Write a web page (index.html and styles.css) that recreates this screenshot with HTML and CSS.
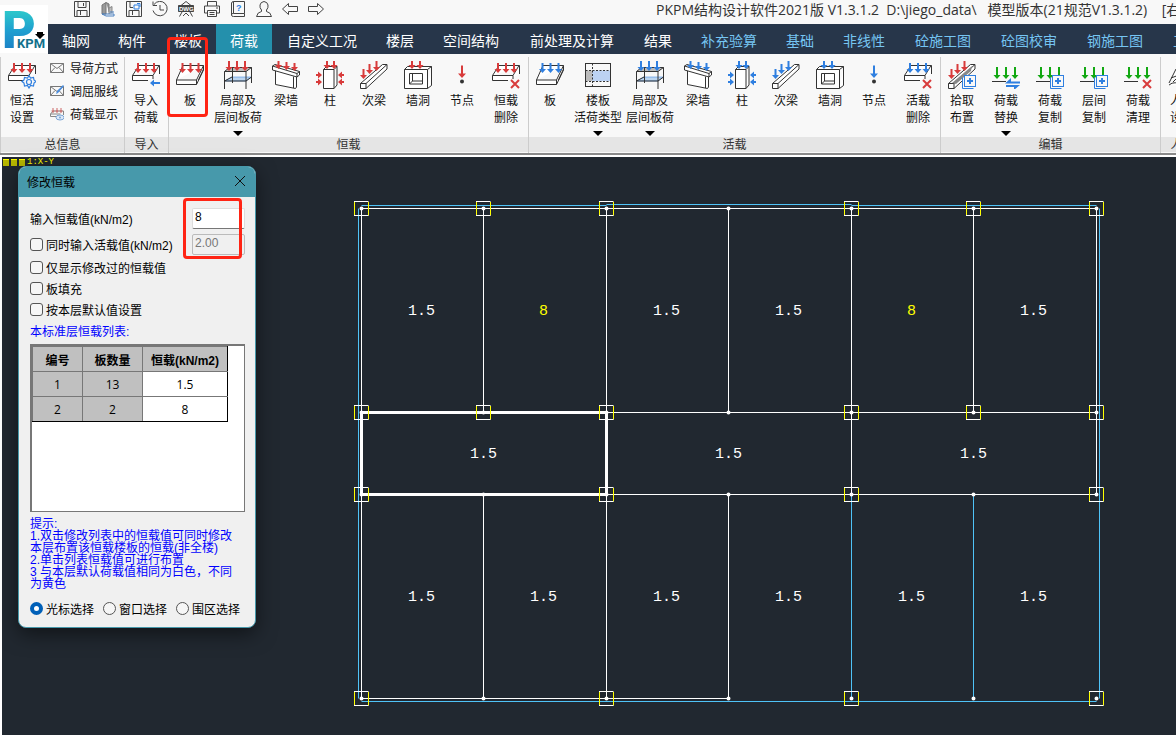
FILE: index.html
```
<!DOCTYPE html>
<html lang="zh-CN">
<head>
    <meta charset="UTF-8" />
    <meta name="viewport" content="width=device-width, initial-scale=1.0" />
    <title>PKPM结构设计软件</title>
    <link rel="stylesheet" href="styles.css">
</head>
<body>
    <svg class="sprite" aria-hidden="true">
        <defs>
            <path id="arrow" d="M-1 0h2v6h2.500L0 10l-3.500-4H-1z" fill="currentColor" />
            <path id="arrow-short" d="M-1 0h2v4h2.500L0 8l-3.500-4H-1z" fill="currentColor" />
            <path id="arrow-side" d="M0-1h2v-2.500L6 0 2 3.500V1H0z" fill="currentColor" />
            <path id="cross" d="M-4-4 4 4M4-4-4 4" stroke="#d83b3b" stroke-width="2" fill="none" />
            <g id="copy" fill="#f8f8f8" stroke="#2f7fe0" stroke-width="1">
                <path d="M14.500 16.500v11h11" />
                <rect x="16.500" y="14.500" width="11" height="11" />
                <path d="M22 17v6M19 20h6" stroke-width="2" />
            </g>
        </defs>
        <symbol id="i-slab" viewBox="0 0 28 28">
            <path class="ln" d="M.5 19 7 4.500h20.500L20.500 19zM.5 19v4.500h20L27.500 9V4.500M20.500 19v4.500M22.500 19l5-11" />
            <use href="#arrow" x="6.500" y="2" /><use href="#arrow" x="14.500" y="2" /><use href="#arrow" x="22.500" y="2" />
        </symbol>
        <symbol id="i-slab-half" viewBox="0 0 28 28">
            <path class="ln" d="M16 19.500H.5v-5l6.500-10h20.500V13M.5 14.500h20.500l6-10M21 14.500V18" />
            <use href="#arrow" x="6" y="2" /><use href="#arrow" x="14" y="2" /><use href="#arrow" x="22" y="2" />
        </symbol>
        <symbol id="i-set" viewBox="0 0 28 28">
            <use href="#i-slab-half" width="28" height="28" />
            <path d="M21 14.500l1.500 2.500 3-.5.500 2.500 2 1.500-2 1.500-.5 3-3-.5-1.500 2.500-1.500-2.500-3 .5-.5-3-2-1.500 2-1.500.5-2.500 3 .5z" fill="#f8f8f8" stroke="#2f7fe0" stroke-width="1.200" />
            <circle cx="21" cy="21" r="2.500" fill="none" stroke="#2f7fe0" stroke-width="1.200" />
        </symbol>
        <symbol id="i-import" viewBox="0 0 28 28">
            <use href="#i-slab-half" width="28" height="28" />
            <path d="M18 22l4-3.500V21h6v2h-6v2.500z" fill="#2f7fe0" />
        </symbol>
        <symbol id="i-delete" viewBox="0 0 28 28">
            <use href="#i-slab-half" width="28" height="28" />
            <use href="#cross" x="23" y="23" />
        </symbol>
        <symbol id="i-frame" viewBox="0 0 28 28">
            <path d="M.5 10.500l5-4h22l-5.500 4z" fill="#bbb" />
            <path d="M.5 20 8 16h19.500L22 20z" fill="#bcd5f0" stroke="#2f7fe0" stroke-width=".5" />
            <path class="ln no-fill" d="M.5 28V10.500l5-4h22V22M.5 10.500H22V28M22 10.500l5.500-4M8.500 6.500V22M.5 20 8 16M.5 20H22l5.500-4" />
            <use href="#arrow" x="5" /><use href="#arrow" x="13" /><use href="#arrow" x="21" />
        </symbol>
        <symbol id="i-wall" viewBox="0 0 28 28">
            <path class="ln" d="M3.500 9v14.500l20 4 1-1.500V16M21.500 15.500V27" />
            <path class="ln" d="M.5 5l2.500-1.500 24.500 7V14L25 16 .5 9zM.5 5 25 12.500V16M25 12.500l2.500-2" />
            <use href="#arrow-short" x="6.500" /><use href="#arrow-short" x="14.500" y="1" /><use href="#arrow-short" x="22.500" y="2" />
        </symbol>
        <symbol id="i-column" viewBox="0 0 28 28">
            <path class="ln" d="M7.500 8.500h10.500v19H7.500zM7.500 8.500l3-3h10.500l-3 3M21 5.500V24l-3 3.500" />
            <use href="#arrow-short" x="11" /><use href="#arrow-short" x="18" />
            <use href="#arrow-side" y="14" /><use href="#arrow-side" y="21" />
            <use href="#arrow-side" y="14" transform="matrix(-1 0 0 1 28 0)" /><use href="#arrow-side" y="21" transform="matrix(-1 0 0 1 28 0)" />
        </symbol>
        <symbol id="i-beam" viewBox="0 0 28 28">
            <path class="ln" d="M.5 22.500 22.500 3.500h4.500V8L6 27.500H.5zM.5 22.500H6v5M6 22.500 27 3.500" />
            <use href="#arrow" x="3.500" y="8" /><use href="#arrow" x="9.500" y="3" /><use href="#arrow" x="16.500" />
        </symbol>
        <symbol id="i-hole" viewBox="0 0 28 28">
            <path class="ln" d="M.5 8.500h23v19H.5zM.5 8.500l3-3h24l-4 3M27.500 5.500v19l-4 3M5.500 12.500h13v10.500h-13zM8.500 12.500V20h10M5.500 23l3-3" />
            <use href="#arrow-short" x="8" /><use href="#arrow-short" x="16" />
        </symbol>
        <symbol id="i-node" viewBox="0 0 28 28">
            <path d="M13 4.500h2v8h3L14 17l-4-4.500h3z" fill="currentColor" />
            <circle cx="14" cy="20.500" r="2" fill="#333" />
        </symbol>
        <symbol id="i-type" viewBox="0 0 28 28">
            <path d="M1.500 9.500H8V20H1.500z" fill="#bbb" /><path d="M8 9.500h18.500V20H8z" fill="#bcd2f2" />
            <rect class="ln no-fill" x="1.500" y="2.500" width="25" height="23" />
            <path class="ln no-fill" d="M8.500 2.500v23M1.500 9.500h25M1.500 20.500h25" stroke-dasharray="2 1.500" />
        </symbol>
        <symbol id="i-pick" viewBox="0 0 28 28">
            <path class="ln" d="M.5 22.500 22.500 3.500h4.500V8L6 27.500H.5zM.5 22.500H6v5M6 22.500 27 3.500" />
            <path d="M4 22 24 5l-1 5L8 23z" fill="#888" />
            <use href="#arrow" x="3.500" y="8" /><use href="#arrow" x="9.500" y="3" /><use href="#arrow" x="16.500" />
            <use href="#copy" />
        </symbol>
        <symbol id="i-loads" viewBox="0 0 28 28">
            <path class="ln" d="M0 20.500h14" />
            <path d="M4 6h2v8h2.500L5 18l-3.500-4H4zM13 6h2v8h2.500L14 18l-3.500-4H13zM22 6h2v8h2.500L23 18l-3.500-4H22z" fill="#12a812" />
        </symbol>
        <symbol id="i-swap" viewBox="0 0 28 28">
            <use href="#i-loads" width="28" height="28" />
            <path d="M13 22.500l6-5.500v3.500h9v2zM28 24l-6 5v-3h-8v-2z" fill="#2f7fe0" />
        </symbol>
        <symbol id="i-copy" viewBox="0 0 28 28"><use href="#i-loads" width="28" height="28" /><use href="#copy" /></symbol>
        <symbol id="i-clear" viewBox="0 0 28 28"><use href="#i-loads" width="28" height="28" /><use href="#cross" x="23" y="23" /></symbol>
        <symbol id="i-person" viewBox="0 0 28 28"><path class="ln" d="M1 22l7-14 9-5M3 17l8-3M5 21l8-8 6-2M1 24q6-5 13 1" /></symbol>
        <symbol id="i-mail" viewBox="0 0 14 14"><path d="M.5 2.500h13v9H.5zM.5 2.500 7 7.500l6.500-5M.5 11.500l4.500-5M13.500 11.500l-4.500-5" fill="none" stroke="#777" /></symbol>
        <symbol id="i-edit" viewBox="0 0 14 14"><use href="#i-mail" width="14" height="14" /><path d="M6 10l1-3 6-6 1 1-6 7z" fill="#4a8ee0" /></symbol>
        <symbol id="i-show" viewBox="0 0 14 14">
            <path d="M6 9.500H.5V7L3 4h10.500v4M.5 7h10" fill="none" stroke="#888" />
            <path d="M3 1v5M7 1v5M11 1v5M1.500 4h3M5.500 4h3M9.500 4h3" stroke="#c66" fill="none" />
            <ellipse cx="10" cy="10.500" rx="4" ry="2.500" fill="#dce9f8" stroke="#7da6d6" /><circle cx="10" cy="10.500" r="1" fill="#7da6d6" />
        </symbol>
        <symbol id="node-box" viewBox="-8 -8 16 16" overflow="visible">
            <path d="M-7-7V7M7-6.500V7" stroke="#ff0" /><path d="M-7.500-7H7M-7.500 7H7" stroke="#fff" />
        </symbol>
    </svg>

    <header class="top">
        <button class="logo" aria-label="PKPM">
            <svg width="48" height="48" viewBox="0 0 48 48">
                <defs>
                    <linearGradient id="pGrad" x1="0" y1="0" x2="0" y2="1">
                        <stop offset="0.200" stop-color="#2cc5cb" /><stop offset=".5" stop-color="#1f9fd0" /><stop offset="1" stop-color="#1a6fc0" />
                    </linearGradient>
                </defs>
                <text x="2" y="43" class="logo-p">P</text>
                <text x="17" y="43" class="logo-kpm">KPM</text>
                <path d="M37 27h6v2h2l-5 5-5-5h2z" fill="#000" />
            </svg>
        </button>
        <div class="top-main">
            <div class="title-bar">
                <div class="quick">
                    <button aria-label="保存"><svg viewBox="0 0 16 16"><path d="M.5.5h15v15H.5zM4 .5v6h8v-6M9.500 2v3M3 15.500v-6h10v6M6.500 10v4" /></svg></button>
                    <button aria-label="模型"><svg viewBox="0 0 16 16"><path d="M2 13V4l4-2.500V13zM6 1.500 9 3v8" fill="#999" stroke="#777" /><path d="M9 13V7l3-1.500V12" fill="#bbb" stroke="#888" /><path d="M2 13h12v2H6zM10 11h4" stroke="#4a80c0" /></svg></button>
                    <button aria-label="另存为"><svg viewBox="0 0 16 16"><path d="M.5.5h15v15H.5zM4 .5v6h3M3 15.500v-6h10v6M6.500 10v4" /><path d="M8 4h5v4H8zM11 2.500h3V6" stroke="#2f7fe0" /></svg></button>
                    <button aria-label="历史"><svg viewBox="0 0 16 16"><path d="M2 3.500a7.200 7.200 0 1 1-1 6M1 .5v4h4M8 4v5h4" /></svg></button>
                    <button aria-label="DWG"><svg viewBox="0 0 16 16"><path d="M3 4.500 8 .5l5 4M4 11l-2.500 4.500M12 11l2.500 4.500M5 15l3-3 3 3" /><path d="M.5 4.500h15v6H.5z" fill="#444" /><text x="1" y="10" class="dwg">DWG</text></svg></button>
                    <button aria-label="打印"><svg viewBox="0 0 16 16"><path d="M3.500 5V.5h9V5M3.500 12H.5V5h15v7h-3M3.500 9.500h9v6h-9zM5.500 11.500h5M5.500 13.500h5M12 7h2" /></svg></button>
                    <button aria-label="帮助"><svg viewBox="0 0 16 16"><path d="M3.500.5h11v12h-11zM1.500 2v12q0 1.500 2 1.500h11v-3M3.500.5q-2 0-2 2M1.500 13.500q0-1 2-1" /><text x="6" y="10" class="help">?</text></svg></button>
                    <button aria-label="用户"><svg viewBox="0 0 16 16"><path d="M5.500 9q-2-2-1.500-5t4-3.500q3.500.5 4 3.500t-1.500 5v1.500q4 .5 5 5H.5q1-4.500 5-5z" /></svg></button>
                    <button aria-label="撤销"><svg viewBox="0 0 16 16"><path d="M.5 8l6-5.500v3h9v5h-9v3z" /></svg></button>
                    <button aria-label="重做"><svg viewBox="0 0 16 16"><path d="M15.500 8l-6-5.500v3h-9v5h9v3z" /></svg></button>
                </div>
                <h1 class="title">PKPM结构设计软件2021版 V1.3.1.2&nbsp; D:\jiego_data\&nbsp;&nbsp; 模型版本(21规范V1.3.1.2)&nbsp;&nbsp;&nbsp; [右键</h1>
            </div>
            <nav class="tabs">
                <button>轴网</button>
                <button>构件</button>
                <button>楼板</button>
                <button class="active">荷载</button>
                <button class="wide">自定义工况</button>
                <button>楼层</button>
                <button class="wide">空间结构</button>
                <button class="wider">前处理及计算</button>
                <button>结果</button>
                <button class="wide alt">补充验算</button>
                <button class="alt">基础</button>
                <button class="wide alt">非线性</button>
                <button class="wide alt">砼施工图</button>
                <button class="wide alt">砼图校审</button>
                <button class="wide alt">钢施工图</button>
                <button class="wide alt">工具集</button>
            </nav>
        </div>
    </header>

    <div class="ribbon">
        <section class="group">
            <div class="tools">
                <button class="tool"><svg><use href="#i-set" /></svg>恒活<br>设置</button>
                <div class="small-tools">
                    <button><svg><use href="#i-mail" /></svg>导荷方式</button>
                    <button><svg><use href="#i-edit" /></svg>调屈服线</button>
                    <button><svg><use href="#i-show" /></svg>荷载显示</button>
                </div>
            </div>
            <h2>总信息</h2>
        </section>
        <section class="group">
            <div class="tools">
                <button class="tool"><svg><use href="#i-import" /></svg>导入<br>荷载</button>
            </div>
            <h2>导入</h2>
        </section>
        <section class="group">
            <div class="tools">
                <button class="tool marked"><svg><use href="#i-slab" /></svg>板</button>
                <button class="tool big drop"><svg><use href="#i-frame" /></svg>局部及<br>层间板荷</button>
                <button class="tool"><svg><use href="#i-wall" /></svg>梁墙</button>
                <button class="tool"><svg><use href="#i-column" /></svg>柱</button>
                <button class="tool"><svg><use href="#i-beam" /></svg>次梁</button>
                <button class="tool"><svg><use href="#i-hole" /></svg>墙洞</button>
                <button class="tool"><svg><use href="#i-node" /></svg>节点</button>
                <button class="tool"><svg><use href="#i-delete" /></svg>恒载<br>删除</button>
            </div>
            <h2>恒载</h2>
        </section>
        <section class="group live">
            <div class="tools">
                <button class="tool"><svg><use href="#i-slab" /></svg>板</button>
                <button class="tool big drop"><svg><use href="#i-type" /></svg>楼板<br>活荷类型</button>
                <button class="tool big drop"><svg><use href="#i-frame" /></svg>局部及<br>层间板荷</button>
                <button class="tool"><svg><use href="#i-wall" /></svg>梁墙</button>
                <button class="tool"><svg><use href="#i-column" /></svg>柱</button>
                <button class="tool"><svg><use href="#i-beam" /></svg>次梁</button>
                <button class="tool"><svg><use href="#i-hole" /></svg>墙洞</button>
                <button class="tool"><svg><use href="#i-node" /></svg>节点</button>
                <button class="tool"><svg><use href="#i-delete" /></svg>活载<br>删除</button>
            </div>
            <h2>活载</h2>
        </section>
        <section class="group">
            <div class="tools">
                <button class="tool"><svg><use href="#i-pick" /></svg>拾取<br>布置</button>
                <button class="tool drop"><svg><use href="#i-swap" /></svg>荷载<br>替换</button>
                <button class="tool"><svg><use href="#i-copy" /></svg>荷载<br>复制</button>
                <button class="tool"><svg><use href="#i-copy" /></svg>层间<br>复制</button>
                <button class="tool"><svg><use href="#i-clear" /></svg>荷载<br>清理</button>
            </div>
            <h2>编辑</h2>
        </section>
        <section class="group">
            <div class="tools">
                <button class="tool"><svg><use href="#i-person" /></svg>人防<br>设置</button>
            </div>
            <h2>人防</h2>
        </section>
    </div>

    <main class="canvas">
        <svg class="plan" width="100%" height="100%">
            <!-- origin is the top left axis crossing -->
            <g transform="translate(359.500 51.500)" fill="none" stroke="#fff">
                <path class="slab-edge" d="M0-3H245M245-4H490M490-3H735M-3 0V490M738 0V490M0 493H735M490 286V490M612 286V490" />
                <path d="M0 0H735M0 204H735M0 286H735M0 490H367M0 0V490M122 0V204M122 286V490M245 0V490M367 0V204M367 286V490M490 0V286M612 0V204M735 0V286" />
                <rect x="0" y="204" width="245" height="82" stroke-width="3" />
                <path class="dots" d="M0 0h0M122 0h0M245 0h0M367 0h0M490 0h0M612 0h0M735 0h0M0 204h0M122 204h0M245 204h0M367 204h0M490 204h0M612 204h0M735 204h0M0 286h0M122 286h0M245 286h0M367 286h0M490 286h0M612 286h0M735 286h0M0 490h0M122 490h0M245 490h0M367 490h0M490 490h0M612 490h0M735 490h0" />
                <g class="boxes">
                    <use href="#node-box" x="-8" y="-8" width="16" height="16" />
                    <use href="#node-box" x="114" y="-8" width="16" height="16" />
                    <use href="#node-box" x="237" y="-8" width="16" height="16" />
                    <use href="#node-box" x="482" y="-8" width="16" height="16" />
                    <use href="#node-box" x="604" y="-8" width="16" height="16" />
                    <use href="#node-box" x="727" y="-8" width="16" height="16" />
                    <use href="#node-box" x="-8" y="196" width="16" height="16" />
                    <use href="#node-box" x="114" y="196" width="16" height="16" />
                    <use href="#node-box" x="237" y="196" width="16" height="16" />
                    <use href="#node-box" x="482" y="196" width="16" height="16" />
                    <use href="#node-box" x="604" y="196" width="16" height="16" />
                    <use href="#node-box" x="727" y="196" width="16" height="16" />
                    <use href="#node-box" x="-8" y="278" width="16" height="16" />
                    <use href="#node-box" x="237" y="278" width="16" height="16" />
                    <use href="#node-box" x="482" y="278" width="16" height="16" />
                    <use href="#node-box" x="727" y="278" width="16" height="16" />
                    <use href="#node-box" x="-8" y="482" width="16" height="16" />
                    <use href="#node-box" x="237" y="482" width="16" height="16" />
                    <use href="#node-box" x="482" y="482" width="16" height="16" />
                    <use href="#node-box" x="727" y="482" width="16" height="16" />
                </g>
                <g class="loads">
                    <text x="60" y="106">1.5</text>
                    <text x="182" y="106" class="changed">8</text>
                    <text x="305" y="106">1.5</text>
                    <text x="427" y="106">1.5</text>
                    <text x="550" y="106" class="changed">8</text>
                    <text x="672" y="106">1.5</text>
                    <text x="122" y="249">1.5</text>
                    <text x="367" y="249">1.5</text>
                    <text x="612" y="249">1.5</text>
                    <text x="60" y="392">1.5</text>
                    <text x="182" y="392">1.5</text>
                    <text x="305" y="392">1.5</text>
                    <text x="427" y="392">1.5</text>
                    <text x="550" y="392">1.5</text>
                    <text x="672" y="392">1.5</text>
                </g>
            </g>
        </svg>

        <div class="view-name"><i></i><i></i><i></i>1:X-Y</div>

        <form class="dialog">
            <div class="dialog-title">
                <h2>修改恒载</h2>
                <button type="button" aria-label="关闭"><svg width="12" height="12" viewBox="0 0 12 12"><path d="M1 1l10 10M11 1 1 11" stroke="#111" fill="none" /></svg></button>
            </div>
            <div class="dialog-body">
                <div class="field">
                    <label for="dead">输入恒载值(kN/m2)</label>
                    <input type="text" id="dead" value="8" />
                </div>
                <div class="field">
                    <label><input type="checkbox" />同时输入活载值(kN/m2)</label>
                    <input type="text" aria-label="活载值" value="2.00" disabled />
                </div>
                <label class="check"><input type="checkbox" />仅显示修改过的恒载值</label>
                <label class="check"><input type="checkbox" />板填充</label>
                <label class="check"><input type="checkbox" />按本层默认值设置</label>
                <p class="list-title">本标准层恒载列表:</p>
                <div class="list">
                    <table>
                        <tr><th>编号</th><th>板数量</th><th>恒载(kN/m2)</th></tr>
                        <tr><td>1</td><td>13</td><td>1.5</td></tr>
                        <tr><td>2</td><td>2</td><td>8</td></tr>
                    </table>
                </div>
                <p class="tips">提示:<br>1.双击修改列表中的恒载值可同时修改<br>本层布置该恒载楼板的恒载(非全楼)<br>2.单击列表恒载值可进行布置<br>3 与本层默认荷载值相同为白色，不同<br>为黄色</p>
                <div class="modes">
                    <label><input type="radio" name="mode" checked />光标选择</label>
                    <label><input type="radio" name="mode" />窗口选择</label>
                    <label><input type="radio" name="mode" />围区选择</label>
                </div>
            </div>
        </form>
    </main>
</body>
</html>
```
FILE: styles.css
```
:root {
    --ui: "Open Sans", "Noto Sans CJK SC", sans-serif;
    --dialog: "Liberation Sans", "Noto Sans CJK SC", sans-serif;
    --red: #ff2414;
}
*, *::before, *::after {
    box-sizing: border-box;
}
body {
    margin: 0;
    height: 100vh;
    display: flex;
    flex-direction: column;
    overflow: hidden;
    background: #f8f8f8;
    font-family: var(--ui);
    font-size: 12px;
    color: #111;
}
button {
    padding: 0;
    border: none;
    background: none;
    font: inherit;
    color: inherit;
}
h1, h2, p {
    margin: 0;
    font-weight: normal;
}
.sprite {
    position: absolute;
    width: 0;
    height: 0;
}

/* title bar and tabs */
.top {
    display: flex;
    height: 54px;
}
.logo {
    flex: none;
    width: 48px;
    height: 48px;
    margin-top: 5px;
    background: #fff;
}
.logo svg {
    display: block;
}
.logo-p {
    font: 900 52px Roboto, sans-serif;
    fill: url(#pGrad);
}
.logo-kpm {
    font: bold 13px Roboto, sans-serif;
    fill: #12708c;
}
.top-main {
    flex: 1;
    min-width: 0;
}
.title-bar {
    display: flex;
    height: 24px;
    padding-left: 26px;
    overflow: hidden;
}
.quick {
    flex: none;
    display: flex;
    gap: 10px;
    padding-top: 1px;
}
.quick button, .quick svg {
    display: block;
    width: 16px;
    height: 16px;
}
.quick svg {
    fill: none;
    stroke: #444;
}
.quick text {
    stroke: none;
}
.dwg {
    font: bold 6px "Liberation Sans", sans-serif;
    fill: #fff;
}
.help {
    font: bold 9px "Liberation Sans", sans-serif;
    fill: #2f7fe0;
}
.title {
    margin-left: 332px;
    font-size: 14px;
    line-height: 20px;
    color: #333;
    white-space: nowrap;
}
.tabs {
    display: flex;
    height: 30px;
    background: #27364a;
    overflow: hidden;
}
.tabs button {
    flex: none;
    padding: 2px 14px 0;
    color: #fff;
    font-size: 14px;
}
.tabs .wide {
    padding: 2px 15px 0;
}
.tabs .wider {
    padding: 2px 16px 0;
}
.tabs .active {
    background: #2490ac;
}
.tabs .alt {
    color: #76c5f2;
}

/* ribbon */
.ribbon {
    flex: none;
    display: flex;
    height: 101px;
    padding-top: 3px;
    border-bottom: 2px solid #8a8a8a;
}
.group {
    flex: none;
    display: flex;
    flex-direction: column;
    border-left: 1px solid #ccc;
}
.tools {
    flex: 1;
    display: flex;
    margin-left: -1px;
}
.group > h2 {
    height: 15px;
    margin-bottom: 1px;
    background: #e5e5e5;
    color: #333;
    font-size: 12px;
    line-height: 15px;
    text-align: center;
}
.tool {
    position: relative;
    display: flex;
    flex-direction: column;
    align-items: center;
    width: 44px;
    padding-top: 4px;
    font-size: 12px;
    line-height: 17px;
    color: #111;
    white-space: nowrap;
}
.big {
    width: 52px;
}
.tool svg {
    width: 28px;
    height: 28px;
    margin-bottom: 3px;
    color: #d83b3b;
}
.live .tool svg {
    color: #2f7fe0;
}
.ln {
    fill: #fff;
    stroke: #333;
    stroke-width: 1;
}
.no-fill {
    fill: none;
}
.drop::after {
    content: "";
    margin-top: 5px;
    border: 5px solid transparent;
    border-top-color: #000;
    border-bottom: none;
}
.small-tools {
    display: flex;
    flex-direction: column;
    gap: 5px;
    width: 80px;
    padding: 2px 0 0 6px;
}
.small-tools button {
    display: flex;
    align-items: center;
    gap: 6px;
    height: 18px;
    color: #111;
    white-space: nowrap;
}
.small-tools svg {
    width: 14px;
    height: 14px;
}
.marked::before {
    content: "";
    position: absolute;
    top: -20px;
    left: -1px;
    width: 41px;
    height: 80px;
    border: 3px solid var(--red);
    border-radius: 4px;
}

/* drawing area */
.canvas {
    position: relative;
    flex: 1;
    min-height: 0;
    border-top: 2px solid #fff;
    border-left: 2px solid #fff;
    background: #212830;
}
.plan {
    display: block;
}
.slab-edge {
    stroke: #4fc3f7;
}
.dots {
    stroke-width: 4;
    stroke-linecap: round;
}
.loads {
    fill: #fff;
    stroke: none;
    font: 15px "Liberation Mono", monospace;
    text-anchor: middle;
}
.changed {
    fill: #ff0;
}
.view-name {
    position: absolute;
    top: 1px;
    left: 1px;
    display: flex;
    align-items: center;
    gap: 2px;
    font: 9px/9px "Liberation Mono", monospace;
    color: #ff0;
}
.view-name i {
    width: 6px;
    height: 7px;
    background: #b8b800;
    border-top: 1px solid #ff0;
}

/* dialog */
.dialog {
    position: absolute;
    top: 9px;
    left: 16px;
    width: 238px;
    border: 1px solid #4799ab;
    border-radius: 8px;
    background: #f0f0f0;
    box-shadow: 0 6px 20px rgba(0, 0, 0, 0.5);
    font-family: var(--dialog);
    color: #000;
}
.dialog-title {
    display: flex;
    align-items: center;
    justify-content: space-between;
    height: 30px;
    padding: 0 9px 2px 8px;
    border-radius: 7px 7px 0 0;
    background: #4799ab;
}
.dialog-title h2 {
    font-size: 12px;
}
.dialog-title svg {
    display: block;
}
.dialog-body {
    padding: 8px 10px 10px 11px;
}
.dialog label {
    display: flex;
    align-items: center;
    gap: 3px;
    white-space: nowrap;
}
.field {
    display: flex;
    justify-content: space-between;
    align-items: center;
    height: 26px;
}
.check {
    height: 21px;
}
.dialog input {
    margin: 0;
}
.dialog input[type="text"] {
    width: 53px;
    height: 21px;
    padding: 0 2px 3px;
    border: 1px solid #ddd;
    border-bottom-color: #777;
    border-radius: 2px;
    background: #fff;
    font: 12px var(--dialog);
}
.dialog input:disabled {
    border-color: #bbb;
    background: #f0f0f0;
    color: #777;
}
.dialog input[type="checkbox"],
.dialog input[type="radio"] {
    appearance: none;
    width: 13px;
    height: 13px;
    border: 1px solid #555;
    border-radius: 3px;
    background: #f6f6f6;
}
.dialog input[type="radio"] {
    border-radius: 50%;
}
.dialog input[type="radio"]:checked {
    border: 4px solid #0060b8;
    background: #fff;
}
.list-title {
    color: #00f;
    line-height: 24px;
}
.list {
    height: 168px;
    border: 2px solid #777;
    border-right: 1px solid #777;
    border-bottom: 1px solid #777;
    background: #fff;
}
table {
    border-collapse: collapse;
    font-family: "Open Sans", "Noto Sans CJK SC", sans-serif;
}
th, td {
    height: 25px;
    padding: 0;
    border: 1px solid #777;
    background: #c0c0c0;
    font-size: 12px;
    text-align: center;
    white-space: nowrap;
}
th {
    font-family: var(--dialog);
}
th:nth-child(1) {
    width: 50px;
}
th:nth-child(2) {
    width: 60px;
}
th:nth-child(3) {
    width: 85px;
}
th:last-child, td:last-child {
    border-right-color: #000;
}
td:last-child {
    background: #fff;
}
tr:last-child td {
    border-bottom-color: #000;
}
.tips {
    margin-top: 6px;
    color: #00f;
    line-height: 12px;
    white-space: nowrap;
}
.modes {
    display: flex;
    gap: 9px;
    margin-top: 10px;
}
.field:first-child::after {
    content: "";
    position: absolute;
    top: 31px;
    right: 13px;
    width: 59px;
    height: 61px;
    border: 3px solid var(--red);
    border-radius: 4px;
}
```
